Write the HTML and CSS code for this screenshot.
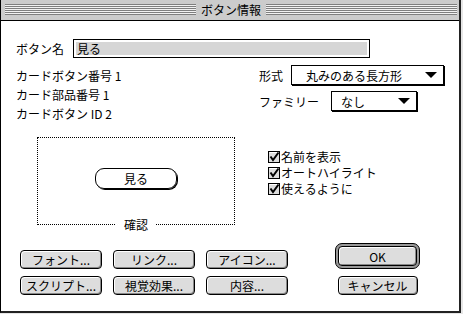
FILE: index.html
```html
<!DOCTYPE html>
<html lang="ja">
<head>
    <meta charset="UTF-8">
    <title>ボタン情報</title>
    <link rel="stylesheet" href="styles.css">
</head>
<body>
    <div class="window">
        <div class="titlebar">
            <div class="stripes"><span class="title">ボタン情報</span></div>
        </div>
        <div class="content">
            <div class="name-row">
                <span class="name-label">ボタン名</span>
                <div class="field"><span>見る</span></div>
            </div>

            <div class="middle">
                <div class="info">
                    <div>カードボタン番号 1</div>
                    <div>カード部品番号 1</div>
                    <div>カードボタン ID 2</div>
                </div>
                <div class="style-col">
                    <div class="style-row">
                        <span class="style-label">形式</span>
                        <div class="popup popup-wide"><span>丸みのある長方形</span><i class="arrow"></i></div>
                    </div>
                    <div class="style-row">
                        <span class="family-label">ファミリー</span>
                        <div class="popup popup-small"><span>なし</span><i class="arrow"></i></div>
                    </div>
                </div>
            </div>

            <div class="preview-row">
                <div class="preview">
                    <div class="round-btn">見る</div>
                    <span class="preview-label">確認</span>
                </div>
                <div class="checks">
                    <div class="check"><svg width="12" height="12" viewBox="0 0 12 12"><rect x="0.5" y="0.5" width="11" height="11" fill="#ddd" stroke="#000"/><path d="M1.5 1.5 H10.5" stroke="#fff"/><path d="M2.5 5.5 L5 9 L10.5 1.5" fill="none" stroke="#000" stroke-width="2"/></svg><span>名前を表示</span></div>
                    <div class="check"><svg width="12" height="12" viewBox="0 0 12 12"><rect x="0.5" y="0.5" width="11" height="11" fill="#ddd" stroke="#000"/><path d="M1.5 1.5 H10.5" stroke="#fff"/><path d="M2.5 5.5 L5 9 L10.5 1.5" fill="none" stroke="#000" stroke-width="2"/></svg><span>オートハイライト</span></div>
                    <div class="check"><svg width="12" height="12" viewBox="0 0 12 12"><rect x="0.5" y="0.5" width="11" height="11" fill="#ddd" stroke="#000"/><path d="M1.5 1.5 H10.5" stroke="#fff"/><path d="M2.5 5.5 L5 9 L10.5 1.5" fill="none" stroke="#000" stroke-width="2"/></svg><span>使えるように</span></div>
                </div>
            </div>

            <div class="button-area">
                <div class="btn-grid">
                    <div class="btn">フォント...</div>
                    <div class="btn">リンク...</div>
                    <div class="btn">アイコン...</div>
                    <div class="btn">スクリプト...</div>
                    <div class="btn">視覚効果...</div>
                    <div class="btn">内容...</div>
                </div>
                <div class="actions">
                    <div class="default-ring"><div class="btn btn-ok">OK</div></div>
                    <div class="btn btn-cancel">キャンセル</div>
                </div>
            </div>
        </div>
    </div>
</body>
</html>
```

FILE: styles.css
```css
* {
    box-sizing: border-box;
}

html, body {
    margin: 0;
    padding: 0;
}

body {
    width: 463px;
    height: 314px;
    overflow: hidden;
    background: #e6e6e6;
    font-family: "Noto Sans CJK JP", "Noto Sans", sans-serif;
    font-size: 12px;
    color: #000;
}

.window {
    width: 461px;
    height: 313px;
    background: #fff;
    border-left: 1px solid #000;
    border-right: 2px solid #222;
    border-bottom: 2px solid #222;
}

.titlebar {
    height: 21px;
    padding: 4px 2px 0 4px;
    background: #cccccc;
    border-bottom: 1px solid #000;
}

.stripes {
    height: 11px;
    display: flex;
    justify-content: center;
    align-items: center;
    background: repeating-linear-gradient(to bottom, #7f7f7f 0 1px, #f2f2f2 1px 2px);
}

.title {
    background: #cccccc;
    padding: 0 5px;
    line-height: 15px;
}

.content {
    padding: 18px 15px 0 15px;
}

.name-row {
    display: flex;
    align-items: center;
}

.name-label {
    width: 57px;
}

.field {
    width: 297px;
    height: 19px;
    border: 1px solid #000;
    padding: 2px;
}

.field span {
    display: block;
    height: 13px;
    line-height: 13px;
    padding-left: 1px;
    background: #d6d6d6;
}

.middle {
    display: flex;
    margin-top: 8px;
}

.info {
    width: 251px;
    line-height: 19px;
}

.style-col {
    display: flex;
    flex-direction: column;
    gap: 6px;
    margin-top: -1px;
}

.style-row {
    display: flex;
    align-items: center;
}

.style-label {
    width: 32px;
}

.family-label {
    width: 72px;
}

.popup {
    height: 20px;
    display: flex;
    align-items: center;
    justify-content: space-between;
    border: 1px solid #000;
    box-shadow: 1px 1px 0 #000;
    padding: 0 6px 0 14px;
}

.popup-wide {
    width: 153px;
}

.popup-small {
    width: 86px;
    padding-left: 9px;
}

.arrow {
    width: 0;
    height: 0;
    border-left: 6px solid transparent;
    border-right: 6px solid transparent;
    border-top: 6px solid #000;
}

.preview-row {
    display: flex;
    margin-top: 14px;
}

.preview {
    position: relative;
    width: 198px;
    height: 88px;
    margin-left: 21px;
    border: 1px dotted #000;
    display: flex;
    justify-content: center;
    align-items: center;
    padding-bottom: 6px;
}

.round-btn {
    width: 82px;
    height: 21px;
    display: flex;
    justify-content: center;
    align-items: center;
    border: 1px solid #000;
    border-radius: 9px;
    box-shadow: 1px 1px 0 #000;
}

.preview-label {
    position: absolute;
    left: 50%;
    bottom: -9px;
    transform: translateX(-50%);
    background: #fff;
    padding: 0 8px;
    line-height: 16px;
}

.checks {
    margin-left: 33px;
    padding-top: 12px;
}

.check {
    display: flex;
    align-items: center;
    height: 16px;
    line-height: 16px;
}

.check svg {
    margin-right: 1px;
    flex: none;
}

.button-area {
    display: flex;
    margin-top: 18px;
}

.btn-grid {
    display: grid;
    grid-template-columns: repeat(3, 82px);
    grid-auto-rows: 19px;
    column-gap: 11px;
    row-gap: 7px;
    margin: 7px 0 0 4px;
}

.btn {
    height: 19px;
    display: flex;
    justify-content: center;
    align-items: center;
    border: 1px solid #000;
    border-radius: 4px;
    background: #dddddd;
    box-shadow: inset 1px 1px 0 #fff, inset -1px -1px 0 #888;
}

.actions {
    margin-left: 47px;
    width: 85px;
    display: flex;
    flex-direction: column;
    align-items: center;
}

.default-ring {
    width: 85px;
    height: 26px;
    padding: 2px;
    border: 1px solid #000;
    border-radius: 7px;
    background: #999;
}

.btn-ok {
    height: 20px;
}

.btn-cancel {
    width: 80px;
    margin-top: 7px;
}
```
